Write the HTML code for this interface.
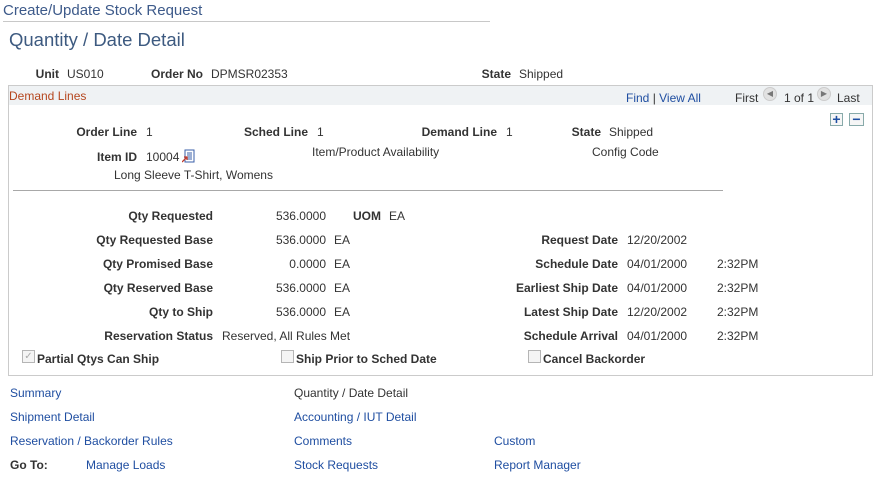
<!DOCTYPE html>
<html><head><style>
body{margin:0;width:878px;height:477px;background:#fff;font-family:"Liberation Sans",Arial,sans-serif;font-size:12px;color:#333;position:relative;overflow:hidden}
.a{position:absolute;white-space:nowrap;line-height:14px}
.r{position:absolute;white-space:nowrap;line-height:14px;text-align:right}
b{font-weight:bold}
.l{color:#1f4ea1}
.cb{position:absolute;width:11px;height:11px;border:1px solid #b5b5b5;background:#f4f4f4}
</style></head><body>
<div class="a" style="left:3px;top:2px;font-size:15px;line-height:17px;color:#3d5a8a">Create/Update Stock Request</div>
<div style="position:absolute;left:3px;top:21px;width:487px;height:1px;background:#c8c8c8"></div>
<div class="a" style="left:9px;top:29px;font-size:18.5px;line-height:22px;color:#3d5a80">Quantity / Date Detail</div>

<b class="r" style="right:819px;top:67px">Unit</b><span class="a" style="left:67px;top:67px">US010</span>
<b class="r" style="right:675px;top:67px">Order No</b><span class="a" style="left:211px;top:67px">DPMSR02353</span>
<b class="r" style="right:367px;top:67px">State</b><span class="a" style="left:519px;top:67px">Shipped</span>

<div style="position:absolute;left:8px;top:85px;width:863px;height:289px;border:1px solid #cbcbcb"></div>
<div style="position:absolute;left:9px;top:86px;width:863px;height:19px;background:#eff2f4"></div>
<div class="a" style="left:9px;top:89px;color:#b5461e">Demand Lines</div>
<div class="a l" style="left:626px;top:91px">Find <span style="color:#333">|</span> View All</div>
<div class="a" style="left:735px;top:91px">First</div>
<div style="position:absolute;left:763px;top:87px;width:14px;height:14px;border-radius:50%;background:#e2e2e2;border:1px solid #ccc;box-sizing:border-box;font-size:8px;line-height:12px;text-align:center;color:#777">◀</div>
<div class="a" style="left:784px;top:91px">1 of 1</div>
<div style="position:absolute;left:817px;top:87px;width:14px;height:14px;border-radius:50%;background:#e2e2e2;border:1px solid #ccc;box-sizing:border-box;font-size:8px;line-height:12px;text-align:center;color:#777">▶</div>
<div class="a" style="left:837px;top:91px">Last</div>
<div style="position:absolute;left:830px;top:113px;width:13px;height:13px;border:1px solid #8aa;box-sizing:border-box;background:#f6f6f6;color:#1f4ea1;font-weight:bold;font-size:14px;line-height:11px;text-align:center">+</div>
<div style="position:absolute;left:849px;top:113px;width:15px;height:13px;border:1px solid #8aa;box-sizing:border-box;background:#f6f6f6;color:#1f4ea1;font-weight:bold;font-size:14px;line-height:10px;text-align:center">−</div>

<b class="r" style="right:741px;top:125px">Order Line</b><span class="a" style="left:146px;top:125px">1</span>
<b class="r" style="right:570px;top:125px">Sched Line</b><span class="a" style="left:317px;top:125px">1</span>
<b class="r" style="right:381px;top:125px">Demand Line</b><span class="a" style="left:506px;top:125px">1</span>
<b class="r" style="right:277px;top:125px">State</b><span class="a" style="left:609px;top:125px">Shipped</span>
<b class="r" style="right:741px;top:150px">Item ID</b><span class="a" style="left:146px;top:150px">10004</span>
<svg style="position:absolute;left:182px;top:149px" width="13" height="14" viewBox="0 0 13 14"><rect x="3" y="1" width="9" height="12" fill="#fff" stroke="#3a5fa8"/><path d="M5 4h5M5 6h5M5 8h5M5 10h5" stroke="#3a5fa8"/><path d="M0 13l5-5M2 8h3v3" stroke="#c0392b" stroke-width="1.3" fill="none"/></svg>
<span class="a" style="left:312px;top:145px">Item/Product Availability</span>
<span class="a" style="left:592px;top:145px">Config Code</span>
<span class="a" style="left:114px;top:168px">Long Sleeve T-Shirt, Womens</span>
<div style="position:absolute;left:13px;top:190px;width:710px;height:1px;background:#a8a8a8"></div>

<b class="r" style="right:665px;top:209px">Qty Requested</b><span class="r" style="right:552px;top:209px">536.0000</span>
<b class="r" style="right:497px;top:209px">UOM</b><span class="a" style="left:389px;top:209px">EA</span>
<b class="r" style="right:665px;top:233px">Qty Requested Base</b><span class="r" style="right:552px;top:233px">536.0000</span><span class="a" style="left:334px;top:233px">EA</span>
<b class="r" style="right:665px;top:257px">Qty Promised Base</b><span class="r" style="right:552px;top:257px">0.0000</span><span class="a" style="left:334px;top:257px">EA</span>
<b class="r" style="right:665px;top:281px">Qty Reserved Base</b><span class="r" style="right:552px;top:281px">536.0000</span><span class="a" style="left:334px;top:281px">EA</span>
<b class="r" style="right:665px;top:305px">Qty to Ship</b><span class="r" style="right:552px;top:305px">536.0000</span><span class="a" style="left:334px;top:305px">EA</span>
<b class="r" style="right:665px;top:329px">Reservation Status</b><span class="a" style="left:222px;top:329px">Reserved, All Rules Met</span>

<b class="r" style="right:260px;top:233px">Request Date</b><span class="a" style="left:627px;top:233px">12/20/2002</span>
<b class="r" style="right:260px;top:257px">Schedule Date</b><span class="a" style="left:627px;top:257px">04/01/2000</span><span class="a" style="left:717px;top:257px">2:32PM</span>
<b class="r" style="right:260px;top:281px">Earliest Ship Date</b><span class="a" style="left:627px;top:281px">04/01/2000</span><span class="a" style="left:717px;top:281px">2:32PM</span>
<b class="r" style="right:260px;top:305px">Latest Ship Date</b><span class="a" style="left:627px;top:305px">12/20/2002</span><span class="a" style="left:717px;top:305px">2:32PM</span>
<b class="r" style="right:260px;top:329px">Schedule Arrival</b><span class="a" style="left:627px;top:329px">04/01/2000</span><span class="a" style="left:717px;top:329px">2:32PM</span>

<div class="cb" style="left:22px;top:350px;font-size:10px;line-height:11px;text-align:center;color:#aaa">✓</div><b class="a" style="left:37px;top:352px">Partial Qtys Can Ship</b>
<div class="cb" style="left:281px;top:350px"></div><b class="a" style="left:296px;top:352px">Ship Prior to Sched Date</b>
<div class="cb" style="left:528px;top:350px"></div><b class="a" style="left:543px;top:352px">Cancel Backorder</b>

<span class="a l" style="left:10px;top:386px">Summary</span>
<span class="a" style="left:294px;top:386px">Quantity / Date Detail</span>
<span class="a l" style="left:10px;top:410px">Shipment Detail</span>
<span class="a l" style="left:294px;top:410px">Accounting / IUT Detail</span>
<span class="a l" style="left:10px;top:434px">Reservation / Backorder Rules</span>
<span class="a l" style="left:294px;top:434px">Comments</span>
<span class="a l" style="left:494px;top:434px">Custom</span>
<b class="a" style="left:10px;top:458px">Go To:</b>
<span class="a l" style="left:86px;top:458px">Manage Loads</span>
<span class="a l" style="left:294px;top:458px">Stock Requests</span>
<span class="a l" style="left:494px;top:458px">Report Manager</span>
</body></html>
